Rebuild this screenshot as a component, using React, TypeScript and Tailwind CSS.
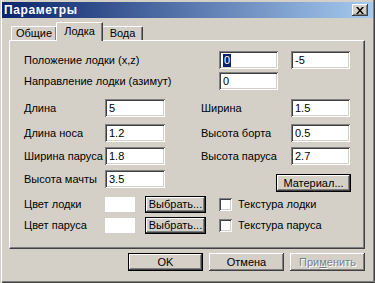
import React from "react";

const raised =
    "bg-[#d4d0c8] shadow-[inset_-1px_-1px_#404040,inset_1px_1px_#fff,inset_-2px_-2px_#808080,inset_2px_2px_#d4d0c8]";
const sunken =
    "bg-white shadow-[inset_1px_1px_#808080,inset_-1px_-1px_#fff,inset_2px_2px_#404040,inset_-2px_-2px_#d4d0c8]";

function Field({ value, w = "w-[60px]", selected = false }: { value: string; w?: string; selected?: boolean }) {
    return (
        <div className={`${sunken} ${w} h-[18px] flex items-center pl-[4px] shrink-0`}>
            {selected ? (
                <span className="bg-[#0a246a] text-white leading-[13px] px-[1px]">{value}</span>
            ) : (
                <span className="leading-[13px]">{value}</span>
            )}
        </div>
    );
}

function Button({
    label,
    w,
    h = "h-[18px]",
    focused = false,
    disabled = false,
}: {
    label: React.ReactNode;
    w: string;
    h?: string;
    focused?: boolean;
    disabled?: boolean;
}) {
    return (
        <div className={`${w} ${h} shrink-0 ${focused ? "border border-black" : ""}`}>
            <div
                className={`${raised} w-full h-full flex items-center justify-center ${
                    disabled ? "text-[#808080] [text-shadow:1px_1px_#fff]" : ""
                }`}
            >
                {label}
            </div>
        </div>
    );
}

function Check({ label }: { label: string }) {
    return (
        <div className="flex items-center">
            <div className={`${sunken} w-[13px] h-[13px] shrink-0`} />
            <span className="ml-[6px]">{label}</span>
        </div>
    );
}

export default function App() {
    return (
        <div
            className="w-[375px] h-[283px] bg-[#d4d0c8] text-black text-[11px] overflow-hidden flex flex-col shadow-[inset_1px_0_#d4d0c8,inset_2px_0_#fff,inset_0_-1px_#404040,inset_0_-2px_#808080,inset_-1px_0_#404040,inset_-2px_0_#808080]"
            style={{ fontFamily: '"Liberation Sans", Arial, sans-serif' }}
        >
            {/* title bar */}
            <div className="mt-[2px] mx-[2px] h-[16px] flex items-center pl-[2px] pr-[5px] bg-[linear-gradient(to_right,#0a246a,#a6caf0)]">
                <span className="text-white font-bold text-[12px] tracking-[0.6px] flex-1">Параметры</span>
                <div className={`${raised} w-[16px] h-[12px] flex items-center justify-center`}>
                    <svg width="8" height="7" viewBox="0 0 8 7">
                        <path d="M0 0h2l2 2.5L6 0h2L5 3.5 8 7H6L4 4.5 2 7H0l3-3.5z" fill="#000" />
                    </svg>
                </div>
            </div>

            {/* tabs */}
            <div className="mt-[4px] ml-[9px] flex items-end h-[18px]">
                <div className="ml-[2px] w-[45px] h-[14px] flex items-center justify-center border-l border-t border-white rounded-tl-[2px] shadow-[inset_-1px_0_#808080]">
                    Общие
                </div>
                <div className="relative z-10 w-[47px] h-[19px] -mb-[1px] pb-[2px] bg-[#d4d0c8] flex items-center justify-center border-l border-t border-white rounded-tl-[2px] border-r border-r-[#404040] shadow-[inset_-1px_0_#808080]">
                    Лодка
                </div>
                <div className="w-[40px] h-[14px] flex items-center justify-center border-t border-white border-r border-r-[#404040] rounded-tr-[2px] shadow-[inset_-1px_0_#808080]">
                    Вода
                </div>
            </div>

            {/* panel */}
            <div className="ml-[9px] w-[356px] h-[209px] border-l border-t border-white border-r border-b border-r-[#404040] border-b-[#404040] shadow-[inset_-1px_-1px_#808080] pl-[14px] pt-[10px] flex flex-col">
                <div className="flex items-center h-[18px]">
                    <span className="w-[195px]">Положение лодки (x,z)</span>
                    <Field value="0" w="w-[59px]" selected />
                    <div className="w-[13px]" />
                    <Field value="-5" w="w-[59px]" />
                </div>
                <div className="flex items-center h-[18px] mt-[3px]">
                    <span className="w-[195px]">Направление лодки (азимут)</span>
                    <Field value="0" w="w-[59px]" />
                </div>

                <div className="flex items-center h-[18px] mt-[9px]">
                    <span className="w-[81px]">Длина</span>
                    <Field value="5" />
                    <span className="ml-[36px] w-[90px]">Ширина</span>
                    <Field value="1.5" w="w-[59px]" />
                </div>
                <div className="flex items-center h-[18px] mt-[7px]">
                    <span className="w-[81px]">Длина носа</span>
                    <Field value="1.2" />
                    <span className="ml-[36px] w-[90px]">Высота борта</span>
                    <Field value="0.5" w="w-[59px]" />
                </div>
                <div className="flex items-center h-[18px] mt-[5px]">
                    <span className="w-[81px]">Ширина паруса</span>
                    <Field value="1.8" />
                    <span className="ml-[36px] w-[90px]">Высота паруса</span>
                    <Field value="2.7" w="w-[59px]" />
                </div>
                <div className="flex items-start h-[22px] mt-[5px]">
                    <span className="w-[81px] h-[18px] flex items-center">Высота мачты</span>
                    <Field value="3.5" />
                    <div className="ml-[111px] mt-[4px]">
                        <Button label="Материал..." w="w-[75px]" focused />
                    </div>
                </div>

                <div className="flex items-center h-[17px] mt-[4px]">
                    <span className="w-[81px]">Цвет лодки</span>
                    <div className="w-[30px] h-[15px] bg-white shrink-0" />
                    <div className="ml-[10px]">
                        <Button label="Выбрать..." w="w-[61px]" h="h-[17px]" focused />
                    </div>
                    <div className="ml-[13px]">
                        <Check label="Текстура лодки" />
                    </div>
                </div>
                <div className="flex items-center h-[17px] mt-[4px]">
                    <span className="w-[81px]">Цвет паруса</span>
                    <div className="w-[30px] h-[15px] bg-white shrink-0" />
                    <div className="ml-[10px]">
                        <Button label="Выбрать..." w="w-[61px]" h="h-[17px]" focused />
                    </div>
                    <div className="ml-[13px]">
                        <Check label="Текстура паруса" />
                    </div>
                </div>
            </div>

            {/* dialog buttons */}
            <div className="mt-[4px] ml-[128px] flex gap-[6px]">
                <Button label="OK" w="w-[75px]" focused />
                <Button label="Отмена" w="w-[75px]" />
                <Button
                    label={
                        <span>
                            При<span className="underline">м</span>енить
                        </span>
                    }
                    w="w-[75px]"
                    disabled
                />
            </div>
        </div>
    );
}
